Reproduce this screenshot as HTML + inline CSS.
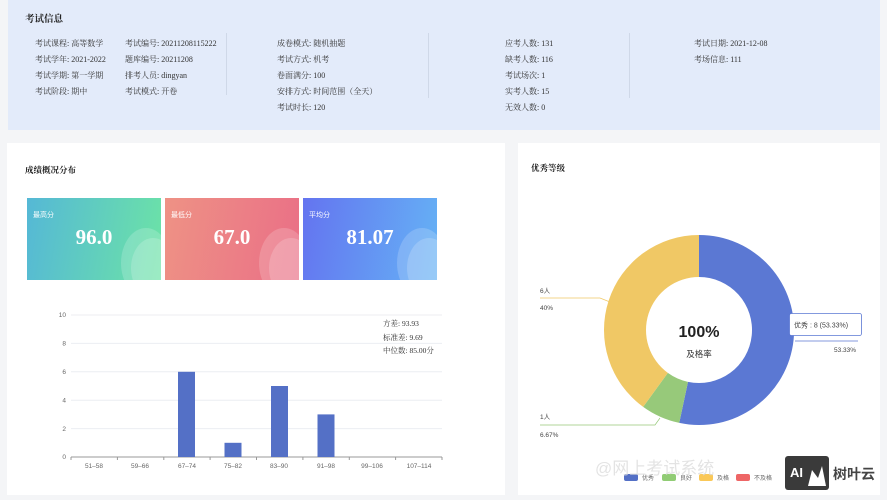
<!DOCTYPE html>
<html><head><meta charset="utf-8"><style>
body{margin:0;width:887px;height:500px;background:#f4f5f7;position:relative;overflow:hidden;font-family:"Liberation Serif","Noto Serif CJK SC",serif;color:#333}
.t{position:absolute;font-size:8px;white-space:nowrap}
.top{position:absolute;left:8px;top:0;width:872px;height:130px;background:#e3ebfa}
.card{position:absolute;background:#fff;top:143px;height:352px}
.vl{position:absolute;top:33px;width:1px;height:62px;background:#cfd8e8}
.sc{position:absolute;top:198px;width:134px;height:82px;overflow:hidden;color:#fff}
.sc .l{position:absolute;left:6px;top:12px;font-size:7px;font-family:"Liberation Sans","Noto Sans CJK SC",sans-serif}
.sc .v{position:absolute;left:0;width:134px;text-align:center;top:27px;font-size:21px;font-weight:bold}
.sc .c1{position:absolute;right:-10px;top:30px;width:50px;height:70px;border-radius:50%;background:rgba(255,255,255,.18)}
.sc .c2{position:absolute;right:-14px;top:40px;width:44px;height:60px;border-radius:50%;background:rgba(255,255,255,.18)}
</style></head><body>
<div class="top"></div>
<div class="t" style="left:25px;top:11px;font-size:9.5px;font-weight:bold;color:#222">考试信息</div>
<div class="t" style="left:35px;top:36px;line-height:16px">考试课程: 高等数学<br>考试学年: 2021-2022<br>考试学期: 第一学期<br>考试阶段: 期中</div>
<div class="t" style="left:125px;top:36px;line-height:16px">考试编号: 20211208115222<br>题库编号: 20211208<br>排考人员: dingyan<br>考试模式: 开卷</div>
<div class="vl" style="left:226px"></div>
<div class="t" style="left:277px;top:36px;line-height:16px">成卷模式: 随机抽题<br>考试方式: 机考<br>卷面满分: 100<br>安排方式: 时间范围（全天）<br>考试时长: 120</div>
<div class="vl" style="left:428px;height:65px"></div>
<div class="t" style="left:505px;top:36px;line-height:16px">应考人数: 131<br>缺考人数: 116<br>考试场次: 1<br>实考人数: 15<br>无效人数: 0</div>
<div class="vl" style="left:629px;height:65px"></div>
<div class="t" style="left:694px;top:36px;line-height:16px">考试日期: 2021-12-08<br>考场信息: 111</div>

<div class="card" style="left:7px;width:498px"></div>
<div class="card" style="left:518px;width:362px"></div>
<div class="t" style="left:25px;top:164px;font-size:8.5px;font-weight:bold;color:#222">成绩概况分布</div>
<div class="t" style="left:531px;top:162px;font-size:8.5px;font-weight:bold;color:#222">优秀等级</div>

<div class="sc" style="left:27px;background:linear-gradient(100deg,#55b8d6,#6ce3a6)"><div class="c1"></div><div class="c2"></div><div class="l">最高分</div><div class="v">96.0</div></div>
<div class="sc" style="left:165px;background:linear-gradient(100deg,#ee9285,#ea6f86)"><div class="c1"></div><div class="c2"></div><div class="l">最低分</div><div class="v">67.0</div></div>
<div class="sc" style="left:303px;background:linear-gradient(100deg,#6474f0,#65b2f5)"><div class="c1"></div><div class="c2"></div><div class="l">平均分</div><div class="v">81.07</div></div>

<svg style="position:absolute;left:0;top:0" width="887" height="500">
<g stroke="#eceef2" stroke-width="1">
<line x1="71" y1="315" x2="442" y2="315"/><line x1="71" y1="343.4" x2="442" y2="343.4"/><line x1="71" y1="371.8" x2="442" y2="371.8"/><line x1="71" y1="400.2" x2="442" y2="400.2"/><line x1="71" y1="428.6" x2="442" y2="428.6"/></g>
<line x1="71" y1="457" x2="442" y2="457" stroke="#999"/>
<g stroke="#999"><line x1="71" y1="457" x2="71" y2="460"/><line x1="117.4" y1="457" x2="117.4" y2="460"/><line x1="163.8" y1="457" x2="163.8" y2="460"/><line x1="210.1" y1="457" x2="210.1" y2="460"/><line x1="256.5" y1="457" x2="256.5" y2="460"/><line x1="302.9" y1="457" x2="302.9" y2="460"/><line x1="349.3" y1="457" x2="349.3" y2="460"/><line x1="395.6" y1="457" x2="395.6" y2="460"/><line x1="442" y1="457" x2="442" y2="460"/></g>
<g fill="#5470c6"><rect x="178" y="371.8" width="17" height="85.2"/><rect x="224.5" y="442.8" width="17" height="14.2"/><rect x="271" y="386" width="17" height="71"/><rect x="317.5" y="414.4" width="17" height="42.6"/></g>
<g font-family="Liberation Sans,sans-serif" font-size="6.5" fill="#666" text-anchor="end">
<text x="66" y="317">10</text><text x="66" y="345.5">8</text><text x="66" y="374">6</text><text x="66" y="402.5">4</text><text x="66" y="431">2</text><text x="66" y="459">0</text></g>
<g font-family="Liberation Sans,sans-serif" font-size="6.5" fill="#666" text-anchor="middle">
<text x="94" y="468">51–58</text><text x="140" y="468">59–66</text><text x="187" y="468">67–74</text><text x="233" y="468">75–82</text><text x="279" y="468">83–90</text><text x="326" y="468">91–98</text><text x="372" y="468">99–106</text><text x="419" y="468">107–114</text></g>
<g font-family="Liberation Serif,Noto Serif CJK SC,serif" font-size="7.5" fill="#333">
<text x="383" y="326">方差: 93.93</text><text x="383" y="340">标准差: 9.69</text><text x="383" y="353">中位数: 85.00分</text></g>

<path d="M699 235 A95 95 0 1 1 679.25 422.9 L687.98 381.84 A53 53 0 1 0 699 277 Z" fill="#5b78d3"/>
<path d="M679.25 422.9 A95 95 0 0 1 643.16 406.86 L667.85 372.88 A53 53 0 0 0 687.98 381.84 Z" fill="#97c97a"/>
<path d="M643.16 406.86 A95 95 0 0 1 699 235 L699 277 A53 53 0 0 0 667.85 372.88 Z" fill="#f0c865"/>
<text x="699" y="337" text-anchor="middle" font-family="Liberation Sans,sans-serif" font-weight="bold" font-size="16" fill="#222">100%</text>
<text x="699" y="357" text-anchor="middle" font-family="Liberation Sans,Noto Sans CJK SC,sans-serif" font-size="8.5" fill="#333">及格率</text>
<polyline points="540,298 600,298 610,302" fill="none" stroke="#f0c865" stroke-width=".7"/>
<polyline points="540,425 655,425 660,418" fill="none" stroke="#97c97a" stroke-width=".7"/>
<line x1="795" y1="341" x2="858" y2="341" stroke="#5b78d3" stroke-width=".7"/>
<g font-family="Liberation Sans,Noto Sans CJK SC,sans-serif" font-size="6.5" fill="#444">
<text x="540" y="293">6人</text><text x="540" y="310">40%</text><text x="540" y="419">1人</text><text x="540" y="437">6.67%</text><text x="834" y="352">53.33%</text></g>
<rect x="789.5" y="313.5" width="72" height="22" rx="2" fill="#fff" stroke="#5b78d3" stroke-width=".8"/>
<text x="794" y="327.5" font-family="Liberation Sans,Noto Sans CJK SC,sans-serif" font-size="7" fill="#444">优秀 : 8 (53.33%)</text>
<g font-family="Liberation Sans,Noto Sans CJK SC,sans-serif" font-size="6" fill="#666">
<rect x="624" y="474" width="14" height="7" rx="2" fill="#5470c6"/><text x="642" y="480">优秀</text>
<rect x="662" y="474" width="14" height="7" rx="2" fill="#91cc75"/><text x="680" y="480">良好</text>
<rect x="699" y="474" width="14" height="7" rx="2" fill="#fac858"/><text x="717" y="480">及格</text>
<rect x="736" y="474" width="14" height="7" rx="2" fill="#ee6666"/><text x="754" y="480">不及格</text></g>
<text x="595" y="474" font-family="Liberation Sans,Noto Sans CJK SC,sans-serif" font-size="17" fill="#ddd" opacity=".8">@网上考试系统</text>
<rect x="785" y="456" width="44" height="34" rx="3" fill="#3a3a3a"/>
<text x="790" y="477" font-family="Liberation Sans,sans-serif" font-weight="bold" font-size="13" fill="#fff">AI</text>
<path d="M808 486 L812 470 L818 478 L822 466 L826 486 Z" fill="#fff"/>
<text x="833" y="479" font-family="Liberation Sans,Noto Sans CJK SC,sans-serif" font-weight="bold" font-size="14" fill="#444">树叶云</text>
</svg>
</body></html>
